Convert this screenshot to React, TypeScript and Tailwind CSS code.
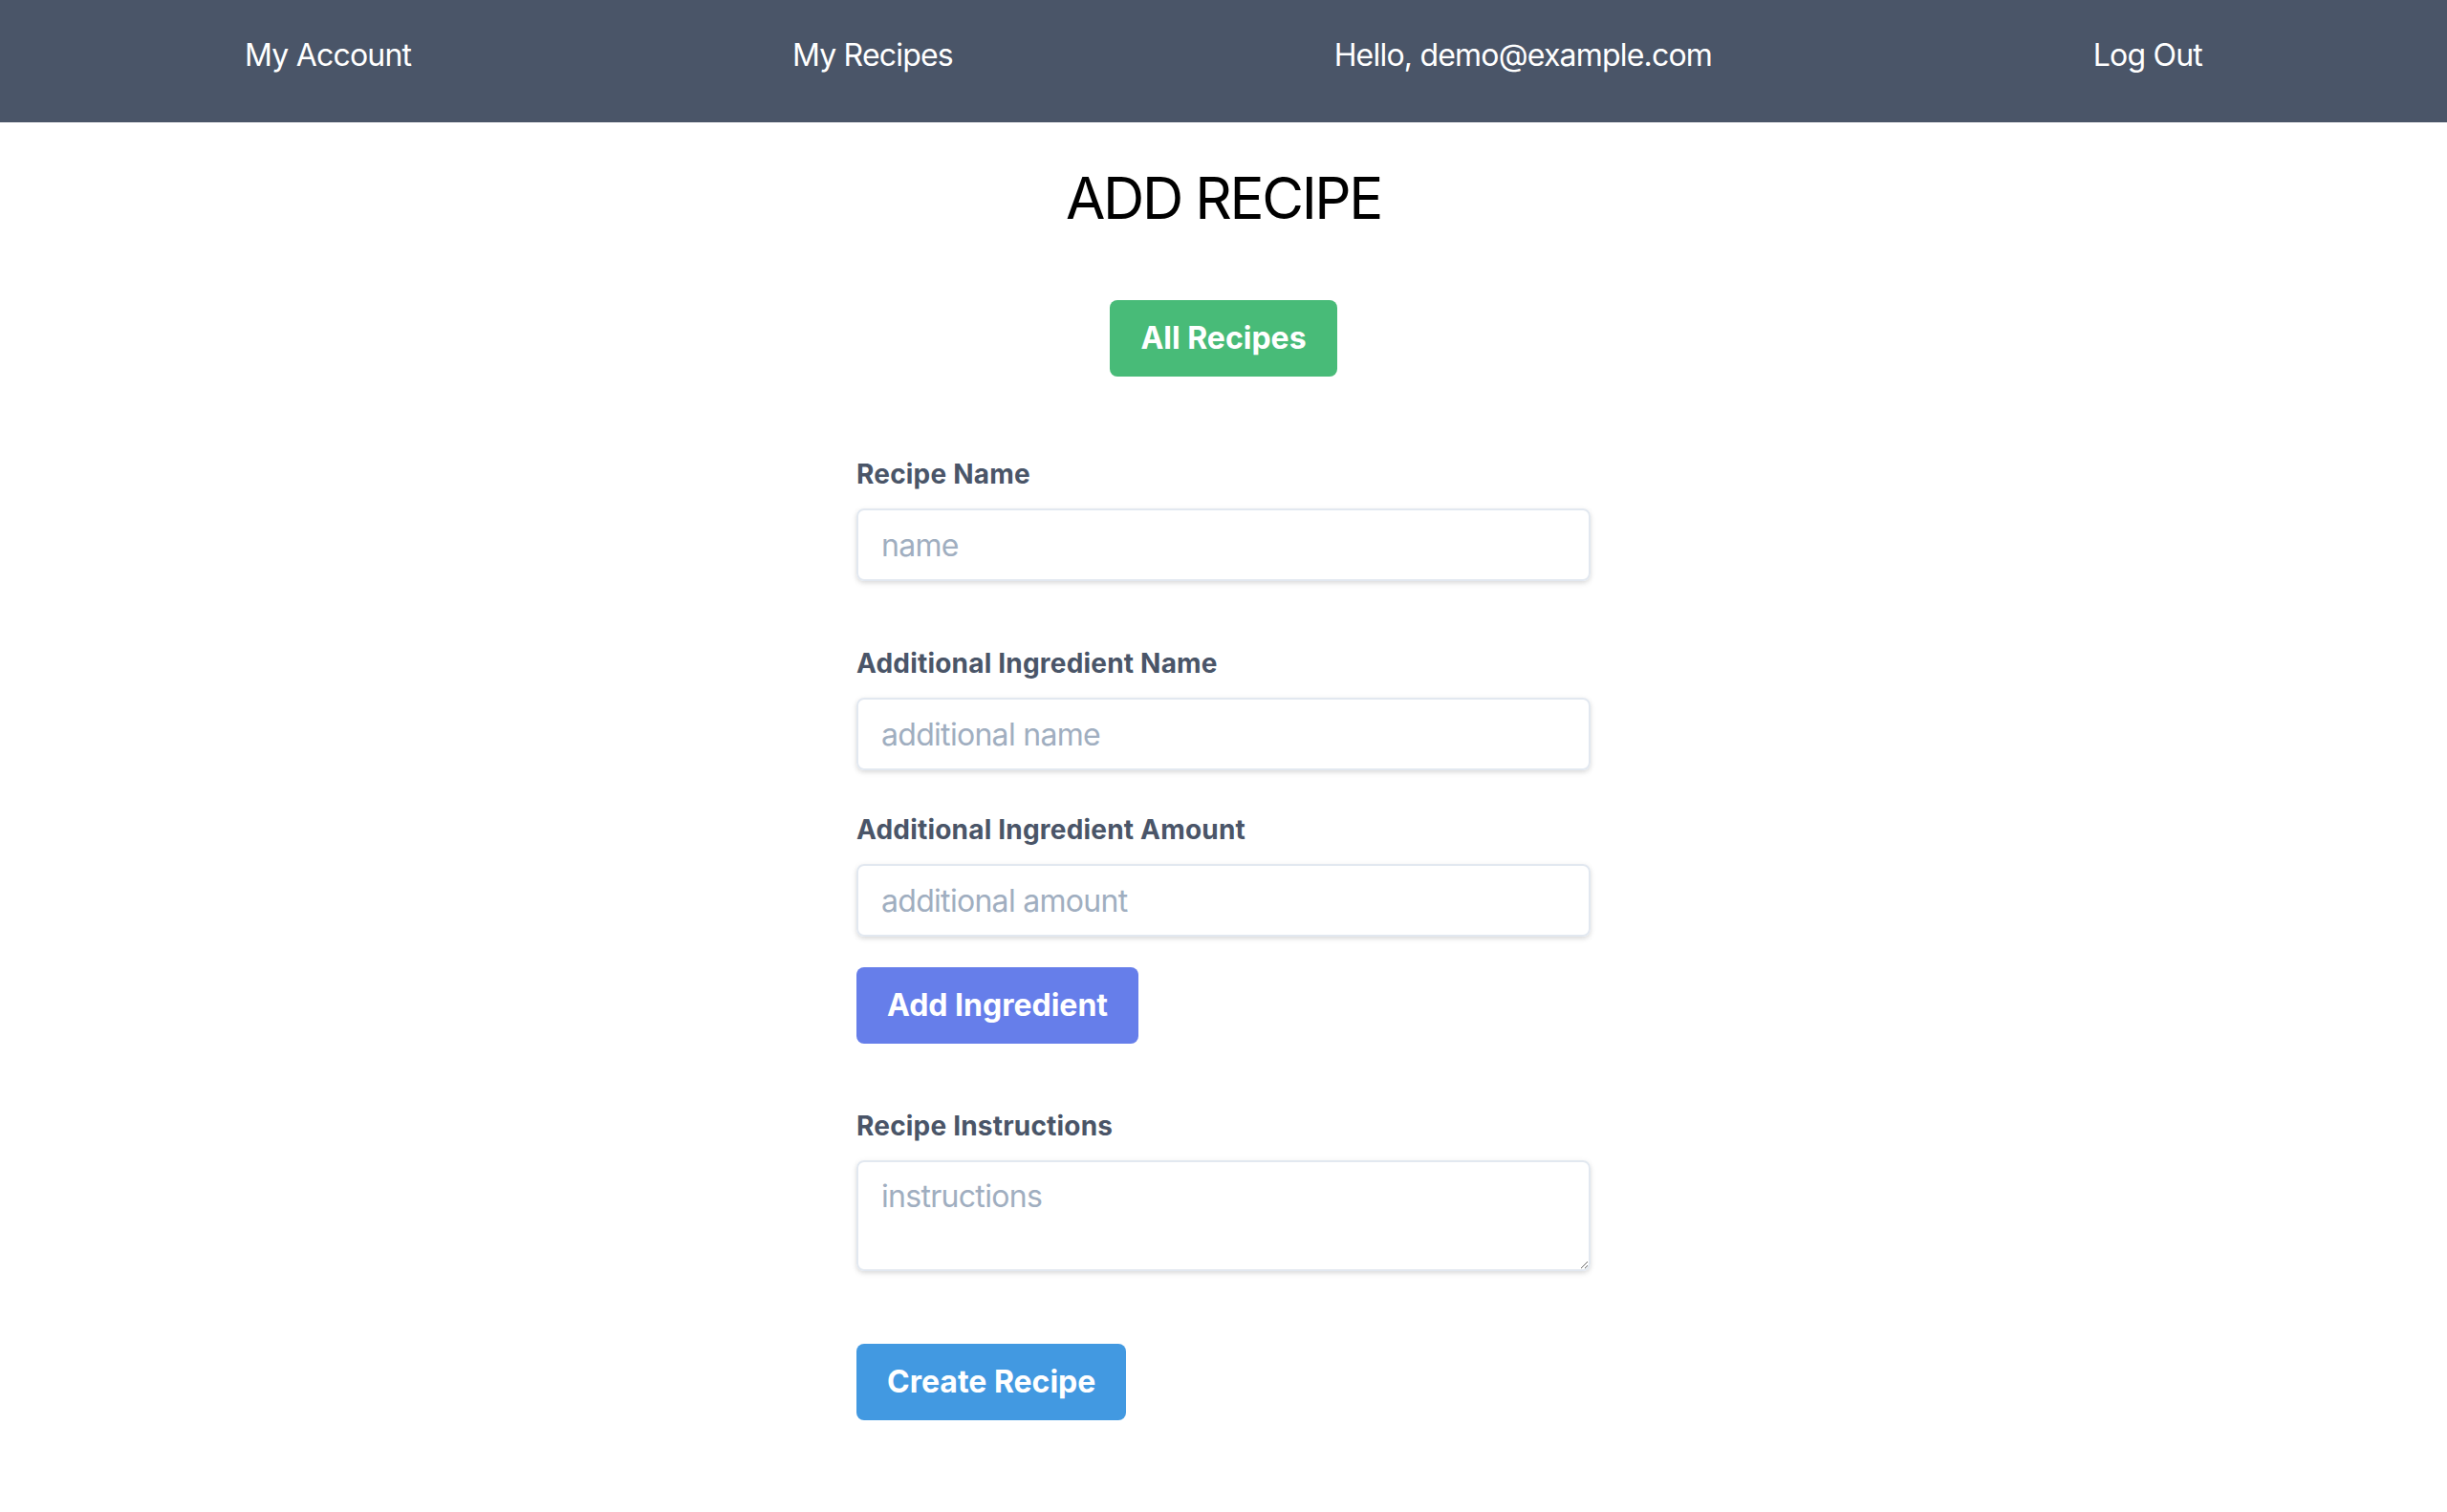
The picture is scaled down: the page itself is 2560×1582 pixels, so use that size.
import { useState } from 'react';

const links = ['My Account', 'My Recipes', 'Hello, demo@example.com', 'Log Out'];

function Field({ label, placeholder, value, onChange }: { label: string; placeholder: string; value: string; onChange: (v: string) => void }) {
    return (
        <div>
            <label className="block text-[28px] leading-[40px] font-bold text-[#4a5568] tracking-[0.2px] mb-[16px]">{label}</label>
            <input
                type="text"
                placeholder={placeholder}
                value={value}
                onChange={(e) => onChange(e.target.value)}
                className="block w-full h-[76px] border-2 border-[#e2e8f0] rounded-[8px] px-[24px] py-[16px] text-[32px] leading-[40px] tracking-[-0.7px] text-[#4a5568] placeholder:text-[#a0aec0] shadow-[0_2px_6px_0_rgba(0,0,0,0.1),0_2px_4px_0_rgba(0,0,0,0.06)] focus:outline-none"
            />
        </div>
    );
}

export default function App() {
    const [name, setName] = useState('');
    const [addName, setAddName] = useState('');
    const [addAmount, setAddAmount] = useState('');
    const [instructions, setInstructions] = useState('');

    return (
        <div className="min-h-screen bg-white font-['Inter','Liberation_Sans',sans-serif]">
            {/* Nav */}
            <nav className="h-[128px] bg-[#4a5568] px-[256px] pt-[34px] flex justify-between items-start">
                {links.map(l => (
                    <a key={l} href="#" className="text-[32px] leading-[48px] tracking-[-0.8px] text-white">{l}</a>
                ))}
            </nav>

            <div className="flex flex-col items-center">
                <h1 className="mt-[43px] text-[60px] leading-[72px] font-normal tracking-[-2.4px] text-black">ADD RECIPE</h1>

                <button className="mt-[71px] bg-[#48bb78] text-white font-bold text-[32px] leading-[48px] px-[32px] py-[16px] rounded-[8px]">
                    All Recipes
                </button>

                {/* Form */}
                <form className="w-[768px] mt-[82px] pb-[96px]" onSubmit={(e) => e.preventDefault()}>
                    <Field label="Recipe Name" placeholder="name" value={name} onChange={setName} />

                    <div className="mt-[66px]">
                        <Field label="Additional Ingredient Name" placeholder="additional name" value={addName} onChange={setAddName} />
                    </div>
                    <div className="mt-[42px]">
                        <Field label="Additional Ingredient Amount" placeholder="additional amount" value={addAmount} onChange={setAddAmount} />
                    </div>

                    <button className="mt-[32px] bg-[#667eea] text-white font-bold text-[32px] leading-[48px] px-[32px] py-[16px] rounded-[8px]">
                        Add Ingredient
                    </button>

                    <div className="mt-[66px]">
                        <label className="block text-[28px] leading-[40px] font-bold text-[#4a5568] tracking-[0.2px] mb-[16px]">Recipe Instructions</label>
                        <textarea
                            rows={2}
                            placeholder="instructions"
                            value={instructions}
                            onChange={(e) => setInstructions(e.target.value)}
                            className="block w-full h-[116px] border-2 border-[#e2e8f0] rounded-[8px] px-[24px] py-[16px] text-[32px] leading-[40px] tracking-[-0.7px] text-[#4a5568] placeholder:text-[#a0aec0] shadow-[0_2px_6px_0_rgba(0,0,0,0.1),0_2px_4px_0_rgba(0,0,0,0.06)] focus:outline-none"
                        />
                    </div>

                    <button className="mt-[76px] bg-[#4299e1] text-white font-bold text-[32px] leading-[48px] px-[32px] py-[16px] rounded-[8px]">
                        Create Recipe
                    </button>
                </form>
            </div>
        </div>
    );
}
